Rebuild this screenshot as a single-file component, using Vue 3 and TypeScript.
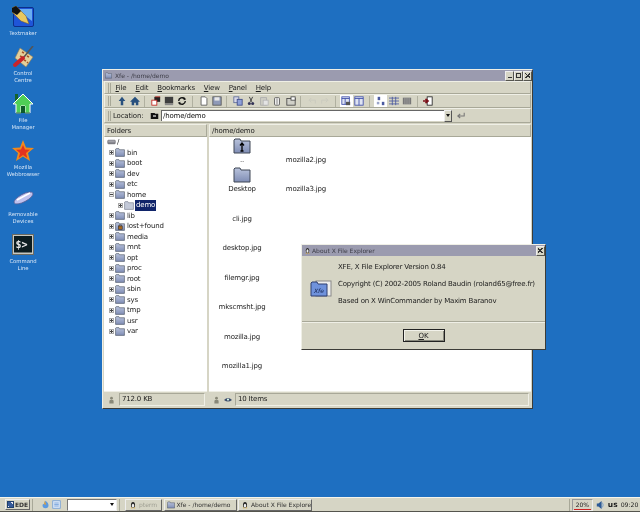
<script setup lang="ts">
// desktop launchers down the left edge
const launchers = [
  { icon: "i-textmaker", lines: ["Textmaker"] },
  { icon: "i-control", lines: ["Control", "Centre"] },
  { icon: "i-house", lines: ["File", "Manager"] },
  { icon: "i-star", lines: ["Mozilla", "Webbrowser"] },
  { icon: "i-usb", lines: ["Removable", "Devices"] },
  { icon: "i-term", lines: ["Command", "Line"] },
];

const menus = [
  { hot: "F", rest: "ile" },
  { hot: "E", rest: "dit" },
  { hot: "B", rest: "ookmarks" },
  { hot: "V", rest: "iew" },
  { hot: "P", rest: "anel" },
  { hot: "H", rest: "elp" },
];

// toolbar groups, split by separators
const tools = [
  ["t-up", "t-home"],
  ["t-links", "t-screen", "t-reload"],
  ["t-new", "t-save"],
  ["t-copy", "t-cut", "t-paste", "t-del", "t-props"],
  ["t-undo", "t-redo"],
  ["t-two", "t-one"],
  ["t-big", "t-list", "t-detail"],
  ["t-exit"],
];
const pressed = ["t-two", "t-big"];

const folders = [
  "bin", "boot", "dev", "etc", "home", "demo", "lib", "lost+found", "media",
  "mnt", "opt", "proc", "root", "sbin", "sys", "tmp", "usr", "var",
];

const files = [
  { name: "..", icon: "i-folder-up" },
  { name: "Desktop", icon: "i-folder" },
  { name: "cli.jpg" },
  { name: "desktop.jpg" },
  { name: "filemgr.jpg" },
  { name: "mkscmsht.jpg" },
  { name: "mozilla.jpg" },
  { name: "mozilla1.jpg" },
  { name: "mozilla2.jpg" },
  { name: "mozilla3.jpg" },
];

const folderIcon = (name: string) => {
  if (name === "lost+found") return "#i-folder-lock";
  if (name === "demo") return "#i-folder-open";
  return "#i-folder";
};
</script>

<template>
  <div class="screen">
    <svg class="defs" width="0" height="0">
      <defs>
        <linearGradient id="fold" x1="0" y1="0" x2="0" y2="1">
          <stop offset="0" stop-color="#b9c3dc" />
          <stop offset="1" stop-color="#7f8db5" />
        </linearGradient>
      </defs>
      <symbol id="i-folder" viewBox="0 0 18 16">
        <path d="M1 4V2l1-1h5l1 2h9v12H1z" fill="url(#fold)" stroke="#3e4654" />
      </symbol>
      <symbol id="i-folder-open" viewBox="0 0 18 16">
        <path d="M1 4V2l1-1h5l1 2h9v12H1z" fill="#c3c9d8" stroke="#6a7080" />
      </symbol>
      <symbol id="i-folder-lock" viewBox="0 0 18 16">
        <path d="M1 4V2l1-1h5l1 2h9v12H1z" fill="url(#fold)" stroke="#3e4654" />
        <rect x="6" y="7" width="7" height="6" fill="#a8661c" stroke="#2c2c2c" />
        <path d="M7.500 7V5h4v2" stroke="#2c2c2c" fill="none" />
      </symbol>
      <symbol id="i-folder-up" viewBox="0 0 18 16">
        <path d="M1 4V2l1-1h5l1 2h9v12H1z" fill="url(#fold)" stroke="#3e4654" />
        <path d="M9 13V6M7 7.500L9 5l2 2.500M7.500 13h3" stroke="#000" stroke-width="1.300" fill="none" />
      </symbol>
      <symbol id="i-textmaker" viewBox="0 0 22 22">
        <rect x="1.500" y="1.500" width="20" height="19" rx="1.500" fill="#1f55d8" stroke="#0c2f8a" />
        <path d="M4 3h16v12z" fill="#6aaef0" />
        <path d="M0 2l4-2 10 10 3 8-8-3L0 6z" fill="#e8c860" stroke="#7a5a20" stroke-width=".5" />
        <path d="M0 2l4-2 5 5-4 4L0 6z" fill="#111" />
      </symbol>
      <symbol id="i-control" viewBox="0 0 22 22">
        <path d="M8 2l13 9-7 10L3 12z" fill="#e4cf9a" stroke="#8b7a55" stroke-width=".6" />
        <path d="M10 6l2 1M15 10l2 1M8 10l2 1M12 14l2 1M15 16l1 1" stroke="#a4522a" stroke-width="1.500" />
        <path d="M21 0l-9 11" stroke="#555" stroke-width="1.600" />
        <path d="M11 12l-8 7" stroke="#c8242a" stroke-width="4" stroke-linecap="round" />
      </symbol>
      <symbol id="i-house" viewBox="0 0 22 22">
        <path d="M3 1h3v6L3 10z" fill="#14632c" />
        <path d="M11 1L1 11h3v9h5v-7h4v7h5v-9h3z" fill="#4fcf56" stroke="#fff" stroke-width="1" />
        <path d="M9 13h4v7H9z" fill="#0e5a2a" />
        <path d="M4 20h5M13 20h5" stroke="#0e5a2a" />
      </symbol>
      <symbol id="i-star" viewBox="0 0 22 22">
        <path d="M11 0l3 7.500 8 .5-6 5 2 8-7-4.500L4 21l2-8-6-5 8-.5z" fill="#f08a1c" />
        <path d="M11 5l2 4.500 5 .3-4 3.200 1.300 5L11 15l-4.300 3L8 13l-4-3.200 5-.3z" fill="#e4321e" />
      </symbol>
      <symbol id="i-usb" viewBox="0 0 22 22">
        <ellipse cx="11.500" cy="11" rx="10.500" ry="3.800" transform="rotate(-28 11.500 11)" fill="#bfc1ee" stroke="#5c5f92" stroke-width=".7" />
        <path d="M5 13L18 6" stroke="#fff" stroke-width="1.500" />
      </symbol>
      <symbol id="i-term" viewBox="0 0 22 22">
        <rect x=".5" y=".5" width="21" height="20" fill="#c8c8c0" stroke="#6a6a62" />
        <rect x="2" y="2" width="18" height="16.500" fill="#0c1c20" />
      </symbol>
      <symbol id="t-up" viewBox="0 0 12 12"><path d="M6 1l4 5H7.500v5h-3V6H2z" fill="#28507e" /></symbol>
      <symbol id="t-home" viewBox="0 0 12 12"><path d="M6 1L0 7h2v4h3V8h2v3h3V7h2z" fill="#27507e" /></symbol>
      <symbol id="t-links" viewBox="0 0 12 12">
        <rect x="4" y="1" width="7" height="6" fill="#222" /><rect x="1" y="5" width="6" height="6" fill="#fff" stroke="#c2231e" />
        <path d="M5 1h6" stroke="#c2231e" />
      </symbol>
      <symbol id="t-screen" viewBox="0 0 12 12">
        <rect x="1" y="1" width="10" height="8" fill="#3e3e3e" /><rect x="1" y="9" width="10" height="2" fill="#888" />
      </symbol>
      <symbol id="t-reload" viewBox="0 0 12 12">
        <path d="M2 6a4 4 0 0 1 7-2.500M10 6a4 4 0 0 1-7 2.500" stroke="#111" stroke-width="1.600" fill="none" />
        <path d="M8 1l3 3-3 1zM4 11L1 8l3-1z" fill="#111" />
      </symbol>
      <symbol id="t-new" viewBox="0 0 12 12"><path d="M2.500 1h5l2 2v8h-7z" fill="#fff" stroke="#555" /></symbol>
      <symbol id="t-save" viewBox="0 0 12 12">
        <rect x="1" y="1" width="10" height="10" fill="#8f9ab8" stroke="#555" /><rect x="3" y="1.500" width="6" height="4" fill="#e8e8e8" />
      </symbol>
      <symbol id="t-copy" viewBox="0 0 12 12">
        <rect x="1" y="1" width="6" height="7" fill="#d8d8e8" stroke="#5a6a98" /><rect x="5" y="4" width="6" height="7" fill="#8ea0d8" stroke="#3c4a88" />
      </symbol>
      <symbol id="t-cut" viewBox="0 0 12 12">
        <path d="M4 1l3 6M8 1L5 7" stroke="#444" stroke-width="1.200" /><circle cx="4" cy="9" r="1.800" fill="#335" /><circle cx="8" cy="9" r="1.800" fill="#335" />
      </symbol>
      <symbol id="t-paste" viewBox="0 0 12 12">
        <rect x="2" y="2" width="7" height="9" fill="#cfcfc6" stroke="#aaa" /><rect x="5" y="5" width="6" height="6" fill="#e4e4e4" stroke="#b4b4b4" />
      </symbol>
      <symbol id="t-del" viewBox="0 0 12 12"><rect x="3" y="2" width="6" height="9" rx="1" fill="#eee" stroke="#555" /><path d="M6 3v7" stroke="#777" /></symbol>
      <symbol id="t-props" viewBox="0 0 12 12">
        <rect x="1" y="3" width="10" height="8" fill="#d0d0c8" stroke="#444" /><rect x="6" y="1" width="5" height="4" fill="#fff" stroke="#444" />
      </symbol>
      <symbol id="t-undo" viewBox="0 0 12 12"><path d="M10 9V5H3M5 2.500L2.500 5 5 7.500" stroke="#cbcbbf" stroke-width="1.200" fill="none" /></symbol>
      <symbol id="t-redo" viewBox="0 0 12 12"><path d="M2 9V5h7M7 2.500L9.500 5 7 7.500" stroke="#cbcbbf" stroke-width="1.200" fill="none" /></symbol>
      <symbol id="t-two" viewBox="0 0 12 12">
        <rect x="1" y="1" width="9" height="9" fill="#dfe4f2" stroke="#3a4aa8" /><path d="M1 3h9M5 3v7" stroke="#3a4aa8" /><rect x="6" y="7" width="5" height="4" fill="#555" />
      </symbol>
      <symbol id="t-one" viewBox="0 0 12 12">
        <rect x="1" y="1" width="10" height="10" fill="#dfe4f2" stroke="#3a4aa8" /><path d="M1 3h10M6 3v8" stroke="#3a4aa8" />
      </symbol>
      <symbol id="t-big" viewBox="0 0 12 12"><rect x="2" y="1" width="3" height="4" fill="#4a5aa0" /><rect x="7" y="7" width="3" height="4" fill="#4a5aa0" /><rect x="1" y="7" width="3" height="3" fill="#9aa4c8" /></symbol>
      <symbol id="t-list" viewBox="0 0 12 12"><path d="M0 2.500h12M0 6h12M0 9.500h12M4 1v10M8 1v10" stroke="#4a5aa0" /></symbol>
      <symbol id="t-detail" viewBox="0 0 12 12"><rect x="1" y="2" width="10" height="8" fill="#777" /><path d="M3.500 2v8M6 2v8M8.500 2v8" stroke="#bbb" stroke-width=".7" /></symbol>
      <symbol id="t-exit" viewBox="0 0 12 12">
        <rect x="5" y="1" width="6" height="10" fill="#fff" stroke="#222" /><path d="M0 6h5M3 3.500L6 6 3 8.500" stroke="#7c1018" stroke-width="2" fill="none" />
      </symbol>
      <symbol id="t-person" viewBox="0 0 10 10"><circle cx="5" cy="2.500" r="2" fill="#888878" /><path d="M2 10V6l1-1h4l1 1v4z" fill="#888878" /></symbol>
      <symbol id="t-eye" viewBox="0 0 10 10"><path d="M0 5q5-5 10 0q-5 4-10 0z" fill="#3a4a6a" /><circle cx="5" cy="4.500" r="1.300" fill="#dfe" /></symbol>
      <symbol id="t-enter" viewBox="0 0 12 10"><path d="M10 1v4H3M5 2.500L2 5l3 2.500" stroke="#777" stroke-width="1.300" fill="none" /></symbol>
      <symbol id="t-loc" viewBox="0 0 12 10"><path d="M1 1h5l1 1h4v7H1z" fill="#111" /><path d="M4 5h4" stroke="#fff" stroke-width="1.500" /></symbol>
      <symbol id="t-drive" viewBox="0 0 14 8"><rect x="1" y="1" width="12" height="6" rx="1.500" fill="#8a8a92" stroke="#4a4a50" stroke-width=".6" /><path d="M2 2.500h10" stroke="#cfcfd4" /></symbol>
      <symbol id="t-tux" viewBox="0 0 10 12">
        <ellipse cx="5" cy="6" rx="3" ry="4.500" fill="#222" /><ellipse cx="5" cy="7" rx="1.800" ry="3" fill="#eee" /><path d="M1.500 11h3l-1-1.500zM5.500 11h3l-1-1.500z" fill="#e8a820" />
      </symbol>
    </svg>

    <div class="desktop">
      <!-- launchers -->
      <div class="launchers">
        <div v-for="item in launchers" :key="item.icon" class="launcher">
          <svg class="launcher_icon" viewBox="0 0 22 22">
            <use :href="'#' + item.icon" width="22" height="22" />
            <text v-if="item.icon === 'i-term'" x="3.500" y="14" class="prompt">$&gt;</text>
          </svg>
          <span v-for="line in item.lines" :key="line" class="launcher_text">{{ line }}</span>
        </div>
      </div>

      <!-- main xfe window -->
      <div class="window main_win">
        <div class="titlebar">
          <svg class="title_icon"><use href="#i-folder" /></svg>
          <span class="title_text">Xfe - /home/demo</span>
          <span class="win_btn"><i class="glyph_min"></i></span>
          <span class="win_btn"><i class="glyph_max"></i></span>
          <span class="win_btn"><i class="glyph_close"></i></span>
        </div>

        <div class="bar menu_bar">
          <span class="grip"></span>
          <span v-for="m in menus" :key="m.hot" class="menu_item"><u>{{ m.hot }}</u>{{ m.rest }}</span>
        </div>

        <div class="bar tool_bar">
          <span class="grip"></span>
          <template v-for="(group, i) in tools" :key="i">
            <span v-if="i > 0" class="tool_sep"></span>
            <span v-for="t in group" :key="t" class="tool" :class="{ tool_on: pressed.includes(t) }">
              <svg><use :href="'#' + t" /></svg>
            </span>
          </template>
        </div>

        <div class="bar loc_bar">
          <span class="grip"></span>
          <span class="loc_label">Location:</span>
          <svg class="loc_icon"><use href="#t-loc" /></svg>
          <div class="loc_input">/home/demo</div>
          <span class="loc_drop"><i></i></span>
          <svg class="loc_enter"><use href="#t-enter" /></svg>
        </div>

        <div class="panels">
          <div class="panel tree_panel">
            <div class="panel_head">Folders</div>
            <div class="panel_body tree">
              <div class="tree_row">
                <svg class="drive"><use href="#t-drive" /></svg>
                <span class="node">/</span>
              </div>
              <div
                v-for="f in folders"
                :key="f"
                class="tree_row"
                :class="{ tree_child: f === 'demo' }"
              >
                <span class="expander" :class="{ expander_open: f === 'home' }"></span>
                <svg class="tree_folder"><use :href="folderIcon(f)" /></svg>
                <span class="node" :class="{ node_sel: f === 'demo' }">{{ f }}</span>
              </div>
            </div>
            <div class="status">
              <svg class="status_icon"><use href="#t-person" /></svg>
              <span class="status_box">712.0 KB</span>
            </div>
          </div>

          <div class="panel file_panel">
            <div class="panel_head">/home/demo</div>
            <div class="panel_body files">
              <div v-for="f in files" :key="f.name" class="file">
                <svg v-if="f.icon" class="file_icon"><use :href="'#' + f.icon" /></svg>
                <span class="file_name">{{ f.name }}</span>
              </div>
            </div>
            <div class="status">
              <svg class="status_icon"><use href="#t-person" /></svg>
              <svg class="status_icon eye"><use href="#t-eye" /></svg>
              <span class="status_box">10 Items</span>
            </div>
          </div>
        </div>
      </div>

      <!-- about dialog -->
      <div class="window about_win">
        <div class="titlebar">
          <svg class="title_icon tux"><use href="#t-tux" /></svg>
          <span class="title_text">About X File Explorer</span>
          <span class="win_btn"><i class="glyph_close"></i></span>
        </div>
        <div class="about_body">
          <svg class="about_icon" viewBox="0 0 22 18">
            <rect x="6" y="1" width="15" height="15" fill="#eee" stroke="#888" />
            <path d="M1 5V3l1-1h5l1 2h9v12H1z" fill="#6f92dc" stroke="#2f3f70" />
            <text x="4" y="13" class="xfe_mark">Xfe</text>
          </svg>
          <div class="about_text">
            <p>XFE, X File Explorer Version 0.84</p>
            <p>Copyright (C) 2002-2005 Roland Baudin (roland65@free.fr)</p>
            <p>Based on X WinCommander by Maxim Baranov</p>
          </div>
        </div>
        <div class="about_foot">
          <button class="ok_btn"><u>O</u>K</button>
        </div>
      </div>
    </div>

    <!-- taskbar -->
    <div class="taskbar">
      <span class="ede_btn"><b class="ede_logo"></b>EDE</span>
      <span class="task_sep"></span>
      <svg class="quick quick_first" viewBox="0 0 12 12">
        <path d="M6 1c3 2 4 4 4 6a4 4 0 0 1-8 0c0-1 1-2 2-2z" fill="#5c9ae0" /><path d="M5 1l2 5H4z" fill="#e8a030" />
      </svg>
      <svg class="quick" viewBox="0 0 12 12">
        <rect x="1" y="1" width="10" height="10" fill="#dbe6f6" stroke="#6a9ad8" /><path d="M3 4h6M3 6h6M3 8h6" stroke="#6a9ad8" />
      </svg>
      <span class="desk_select"><i></i></span>
      <span class="task_sep"></span>
      <span class="task_btn task_pterm"><svg class="task_icon"><use href="#t-tux" /></svg>pterm</span>
      <span class="task_btn task_xfe"><svg class="task_icon"><use href="#i-folder" /></svg>Xfe - /home/demo</span>
      <span class="task_btn task_about"><svg class="task_icon"><use href="#t-tux" /></svg>About X File Explore</span>
      <span class="task_fill"></span>
      <span class="task_sep"></span>
      <span class="cpu">20%<i></i></span>
      <svg class="speaker" viewBox="0 0 10 12">
        <path d="M1 4h2l4-3v10L3 8H1z" fill="#2c5a96" /><path d="M8 3q2 3 0 6" stroke="#6a96cc" fill="none" />
      </svg>
      <b class="layout">us</b>
      <span class="clock">09:20</span>
    </div>
  </div>
</template>

<style>
html,
body {
  margin: 0;
  background: #1e6fc1;
}
</style>

<style scoped>
.screen {
  width: 640px;
  height: 512px;
  display: flex;
  flex-direction: column;
  overflow: hidden;
  background: #1e6fc1;
  font-family: "DejaVu Sans", sans-serif;
  font-size: 7px;
  letter-spacing: -0.18px;
  color: #1c1c1c;
  filter: blur(0.3px);
}
.defs {
  position: absolute;
}
.prompt {
  font: bold 10px "DejaVu Sans Mono", monospace;
  letter-spacing: 0;
  fill: #e8e8e8;
}
.xfe_mark {
  font: italic 6px "DejaVu Sans", sans-serif;
  letter-spacing: 0;
  fill: #10204c;
}

.desktop {
  position: relative;
  flex: 1;
}

/* labels sit at the bottom of each 47px slot */
.launchers {
  width: 46px;
  margin-top: -10.5px;
  display: flex;
  flex-direction: column;
}
.launcher {
  height: 47px;
  display: flex;
  flex-direction: column;
  align-items: center;
  justify-content: flex-end;
  flex-shrink: 0;
}
.launcher_icon {
  width: 22px;
  height: 22px;
  margin-bottom: 1.5px;
  flex-shrink: 0;
}
.launcher_text {
  font-size: 5.300px;
  letter-spacing: 0;
  line-height: 7px;
  color: #d8e6f6;
  white-space: nowrap;
}

.window {
  position: absolute;
  box-sizing: border-box;
  display: flex;
  flex-direction: column;
  background: #d6d5c5;
  border: 1px solid #efefe6;
  border-right-color: #3c3c38;
  border-bottom-color: #3c3c38;
}
.main_win {
  left: 102px;
  top: 69px;
  width: 431px;
  height: 340px;
}
.about_win {
  left: 301px;
  top: 244px;
  width: 245px;
  height: 106px;
}

.titlebar {
  height: 11px;
  display: flex;
  align-items: center;
  background: #9b9baf;
  color: #3e3e48;
  padding-left: 2px;
  flex-shrink: 0;
}
.title_icon {
  width: 7px;
  height: 7px;
  margin-right: 3px;
}
.tux {
  margin-right: 1px;
}
.title_text {
  flex: 1;
  font-size: 6px;
  letter-spacing: 0;
}
.win_btn {
  box-sizing: border-box;
  width: 9px;
  height: 10px;
  background: #d6d5c5;
  border: 1px solid #eee;
  border-right-color: #55554e;
  border-bottom-color: #55554e;
  display: flex;
  align-items: center;
  justify-content: center;
}
.glyph_min {
  width: 4px;
  height: 1px;
  margin-top: 4px;
  background: #333;
}
.glyph_max {
  width: 3px;
  height: 3px;
  border: 1px solid #333;
}
.glyph_close {
  width: 5px;
  height: 5px;
  background:
    linear-gradient(45deg, transparent 40%, #333 40%, #333 60%, transparent 60%),
    linear-gradient(-45deg, transparent 40%, #333 40%, #333 60%, transparent 60%);
}

.bar {
  display: flex;
  align-items: center;
  margin: 0 1px;
  border: 1px solid #efefe6;
  border-right-color: #a8a898;
  border-bottom-color: #a8a898;
  box-sizing: border-box;
  flex-shrink: 0;
}
.grip {
  width: 3px;
  height: 10px;
  margin: 0 0 0 3px;
  border-left: 1px solid #a8a898;
  border-right: 1px solid #a8a898;
  box-sizing: border-box;
  flex-shrink: 0;
}
.menu_bar {
  height: 13px;
}
.menu_item {
  margin: 0 4.5px;
}
.tool_bar {
  height: 14px;
}
.tool_bar .grip {
  margin-right: 4px;
}
.tool {
  width: 13.2px;
  height: 12px;
  display: flex;
  align-items: center;
  justify-content: center;
  flex-shrink: 0;
}
.tool svg {
  width: 10px;
  height: 10px;
}
.tool_on {
  background: #fff;
}
.tool_sep {
  width: 8px;
  height: 11px;
  flex-shrink: 0;
}
.tool_sep::before {
  content: "";
  display: block;
  width: 1px;
  height: 11px;
  margin-left: 3px;
  background: #b0b0a0;
}
.loc_bar {
  height: 15px;
}
.loc_label {
  margin-left: 2px;
  width: 37px;
}
.loc_icon {
  width: 9px;
  height: 8px;
  margin-right: 2px;
}
.loc_input {
  width: 283px;
  height: 11px;
  background: #fff;
  border-top: 1px solid #666;
  border-left: 1px solid #666;
  box-sizing: border-box;
  line-height: 10px;
  padding-left: 1px;
  color: #111;
}
.loc_drop {
  width: 8px;
  height: 12px;
  background: #d6d5c5;
  border: 1px solid #eee;
  border-right-color: #555;
  border-bottom-color: #555;
  box-sizing: border-box;
  display: flex;
  align-items: center;
  justify-content: center;
}
.loc_drop i,
.desk_select i {
  width: 0;
  height: 0;
  border: 2px solid transparent;
  border-top: 3px solid #111;
  border-bottom: 0;
}
.loc_enter {
  width: 10px;
  height: 8px;
  margin-left: 4px;
}

.panels {
  flex: 1;
  display: flex;
  gap: 2px;
  padding: 1px;
  min-height: 0;
}
.panel {
  display: flex;
  flex-direction: column;
}
.tree_panel {
  width: 103px;
}
.file_panel {
  flex: 1;
}
.panel_head {
  height: 13px;
  line-height: 12px;
  padding-left: 2px;
  border: 1px solid #efefe6;
  border-right-color: #a8a898;
  border-bottom-color: #a8a898;
  box-sizing: border-box;
  flex-shrink: 0;
}
.panel_body {
  flex: 1;
  background: #fff;
  min-height: 0;
}
.tree {
  padding-left: 3px;
}
.tree_row {
  height: 10.5px;
  display: flex;
  align-items: center;
}
.drive {
  width: 9px;
  height: 6px;
}
.expander {
  box-sizing: border-box;
  width: 5px;
  height: 5px;
  margin: 0 1px 0 2px;
  border: 1px solid #aaa;
  flex-shrink: 0;
  background:
    linear-gradient(#444, #444) center / 3px 1px no-repeat,
    linear-gradient(#444, #444) center / 1px 3px no-repeat,
    #eee;
}
.expander_open {
  background:
    linear-gradient(#444, #444) center / 3px 1px no-repeat,
    #eee;
}
.tree_child {
  padding-left: 9px;
}
.tree_folder {
  width: 10px;
  height: 9px;
  margin-right: 1px;
  flex-shrink: 0;
}
.node {
  padding: 0 1px;
}
.node_sel {
  height: 11px;
  line-height: 11px;
  background: #10246a;
  color: #fff;
}
.status {
  height: 16px;
  display: flex;
  align-items: center;
  padding-left: 4px;
  flex-shrink: 0;
  border-top: 1px solid #efefe6;
  box-sizing: border-box;
}
.status_icon {
  width: 7px;
  height: 8px;
  margin-right: 4px;
}
.eye {
  width: 8px;
  margin-right: 3px;
}
.status_box {
  flex: 1;
  height: 11px;
  line-height: 10px;
  padding-left: 2px;
  margin-right: 2px;
  border: 1px solid #a8a898;
  border-right-color: #efefe6;
  border-bottom-color: #efefe6;
}

.files {
  display: grid;
  grid-auto-flow: column;
  grid-template-rows: repeat(8, 29.5px);
  grid-template-columns: repeat(2, 64px);
  padding-left: 1px;
}
.file {
  display: flex;
  flex-direction: column;
  align-items: center;
  justify-content: flex-end;
}
.file_icon {
  width: 18px;
  height: 16px;
  margin-bottom: 1px;
}
.file_name {
  line-height: 10px;
  white-space: nowrap;
  margin-bottom: 2px;
}

.about_body {
  flex: 1;
  display: flex;
  min-height: 0;
}
.about_icon {
  width: 22px;
  height: 18px;
  margin: 24px 0 0 8px;
  flex-shrink: 0;
}
.about_text {
  margin-left: 6px;
  padding-top: 2.5px;
}
.about_text p {
  margin: 0;
  height: 17px;
  line-height: 17px;
  white-space: nowrap;
}
.about_foot {
  height: 27px;
  flex-shrink: 0;
  border-top: 1px solid #a8a898;
  box-shadow: inset 0 1px 0 #efefe6;
  display: flex;
  align-items: center;
  justify-content: center;
}
.ok_btn {
  box-sizing: border-box;
  width: 42px;
  height: 13px;
  padding: 0;
  font: 7px "DejaVu Sans", sans-serif;
  color: #222;
  background: #d6d5c5;
  border: 1px solid #222;
  box-shadow: inset 1px 1px 0 #f2f2ea, inset -1px -1px 0 #88887c;
}

.taskbar {
  height: 15px;
  display: flex;
  align-items: center;
  background: #d6d5c5;
  border-top: 1px solid #f4f4ec;
  border-bottom: 1px solid #55554e;
  box-sizing: border-box;
  padding-left: 5px;
  flex-shrink: 0;
  letter-spacing: 0;
}
.ede_btn {
  display: flex;
  align-items: center;
  width: 25px;
  height: 11px;
  font-weight: bold;
  font-size: 6px;
  color: #333;
  border: 1px solid #eee;
  border-right-color: #666;
  border-bottom-color: #666;
  box-sizing: border-box;
  flex-shrink: 0;
}
.ede_logo {
  width: 7px;
  height: 7px;
  margin: 0 1px;
  background: linear-gradient(45deg, #e8e8f4 20%, #355a9a 20%, #355a9a 80%, #e8e8f4 80%);
  border: 0.5px solid #20406e;
  box-sizing: border-box;
  flex-shrink: 0;
}
.task_sep {
  width: 1px;
  height: 12px;
  margin: 0 2px;
  background: #a8a898;
  flex-shrink: 0;
}
.quick {
  width: 9px;
  height: 9px;
  margin-left: 2px;
  flex-shrink: 0;
}
.quick_first {
  margin-left: 6px;
}
.desk_select {
  box-sizing: border-box;
  width: 50px;
  height: 12px;
  margin-left: 6px;
  background: #fff;
  border: 1px solid #777;
  border-right-color: #eee;
  border-bottom-color: #eee;
  display: flex;
  align-items: center;
  justify-content: flex-end;
  padding-right: 2px;
  flex-shrink: 0;
}
.task_btn {
  box-sizing: border-box;
  height: 12px;
  margin-right: 1.5px;
  display: flex;
  align-items: center;
  font-size: 6px;
  white-space: nowrap;
  border: 1px solid #eee;
  border-right-color: #666;
  border-bottom-color: #666;
  padding-left: 2px;
  color: #333;
  flex-shrink: 0;
}
.task_pterm {
  width: 37px;
  margin-left: 3px;
  color: #a0a094;
  padding-left: 3px;
}
.task_xfe {
  width: 73px;
}
.task_about {
  width: 74px;
}
.task_icon {
  width: 8px;
  height: 8px;
  margin-right: 2px;
  flex-shrink: 0;
}
.task_fill {
  flex: 1;
}
.cpu {
  position: relative;
  box-sizing: border-box;
  width: 21px;
  height: 12px;
  line-height: 10px;
  text-align: center;
  font-size: 6px;
  border: 1px solid #999;
  border-right-color: #eee;
  border-bottom-color: #eee;
}
.cpu i {
  position: absolute;
  left: 1px;
  right: 1px;
  bottom: 0;
  height: 1px;
  background: #cc2222;
}
.speaker {
  width: 8px;
  height: 10px;
  margin: 0 4px 0 3px;
}
.layout {
  font-size: 7.500px;
  margin-right: 3px;
}
.clock {
  font-size: 6.2px;
  margin-right: 1.5px;
}
</style>
